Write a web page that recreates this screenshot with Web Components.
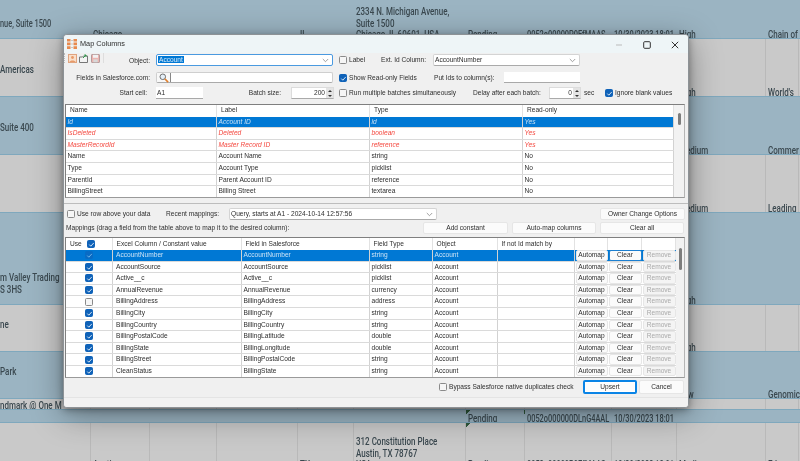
<!DOCTYPE html>
<html lang="en"><head><meta charset="utf-8"><title>Map Columns</title>
<style>html,body{margin:0;padding:0;background:#c8c8c8;overflow:hidden}
sheet-row b>span{display:block;transform:scaleX(.8);transform-origin:0 100%;margin-bottom:-3px}
sheet-row b.n>span{transform:scaleX(.74)}</style></head>
<body>
<desk-top>
  <sheet-row tone="blue" h="39"><b class="n">nue, Suite 1500<br>&nbsp;</b><b>Chicago</b><b></b><b></b><b>IL</b><b>2334 N. Michigan Avenue,<br>Suite 1500<br>Chicago, IL 60601, USA</b><b>Pending</b><b class="n">0052o00000P0EfMAAS</b><b class="n">10/30/2023 18:01</b><b>High</b><b>Chain of</b></sheet-row>
  <sheet-row tone="gray" h="58"><b>Americas<br>&nbsp;<br>&nbsp;</b><b></b><b></b><b></b><b></b><b></b><b></b><b></b><b></b><b>High</b><b>World's</b></sheet-row>
  <sheet-row tone="blue" h="58"><b>Suite 400<br>&nbsp;<br>&nbsp;</b><b></b><b></b><b></b><b></b><b></b><b></b><b></b><b></b><b>Medium</b><b>Commer</b></sheet-row>
  <sheet-row tone="gray" h="58"><b></b><b></b><b></b><b></b><b></b><b></b><b></b><b></b><b></b><b>Medium</b><b>Leading</b></sheet-row>
  <sheet-row tone="blue" h="92"><b>m Valley Trading<br>S 3HS<br>&nbsp;</b><b></b><b></b><b></b><b></b><b></b><b></b><b></b><b></b><b>High</b><b></b></sheet-row>
  <sheet-row tone="gray" h="47"><b>ne<br>&nbsp;<br>&nbsp;</b><b></b><b></b><b></b><b></b><b></b><b></b><b></b><b></b><b>High</b><b></b></sheet-row>
  <sheet-row tone="blue" h="47"><b>Park<br>&nbsp;<br>&nbsp;</b><b></b><b></b><b></b><b></b><b></b><b></b><b></b><b></b><b>Low</b><b>Genomic</b></sheet-row>
  <sheet-row tone="gray" h="11"><b>ndmark @ One M</b><b></b><b></b><b></b><b></b><b></b><b></b><b></b><b></b><b></b><b></b></sheet-row>
  <sheet-row tone="blue" h="13"><b></b><b></b><b></b><b></b><b></b><b></b><b class="flag">Pending</b><b class="n">0052o000000DLnG4AAL</b><b class="n">10/30/2023 18:01</b><b></b><b></b></sheet-row>
  <sheet-row tone="gray" h="46"><b></b><b>Austin</b><b></b><b></b><b>TX</b><b>312 Constitution Place<br>Austin, TX 78767<br>USA</b><b class="flag">Pending</b><b class="n">0052o00000P0EfMAAS</b><b class="n">10/30/2023 18:01</b><b>Medium</b><b>Educ</b></sheet-row>

  <map-dialog>
    <title-bar>Map Columns</title-bar>
    <form-row style="--c:92px 177px 48px 52px 147px;height:12px;margin-top:1px">
      <tool-strip>Object:</tool-strip>
      <ui-combo text="Account" focus></ui-combo>
      <ui-check style="margin-left:6px">Label</ui-check>
      <ui-text>Ext. Id Column:</ui-text>
      <ui-combo text="AccountNumber"></ui-combo>
    </form-row>
    <form-row style="--c:92px 177px 101px 70px 76px;height:10px;margin-top:6px">
      <ui-text right pad="6">Fields in Salesforce.com:</ui-text>
      <search-box></search-box>
      <ui-check checked style="margin-left:6px">Show Read-only Fields</ui-check>
      <ui-text>Put Ids to column(s):</ui-text>
      <ui-input></ui-input>
    </form-row>
    <form-row style="--c:92px 47px 88px 43px 139px 76px 32px 24px 83px;height:10px;margin-top:5px">
      <ui-text right pad="9">Start cell:</ui-text>
      <ui-input text="A1"></ui-input>
      <ui-text right pad="10">Batch size:</ui-text>
      <ui-spin text="200"></ui-spin>
      <ui-check style="margin-left:5px">Run multiple batches simultaneously</ui-check>
      <ui-text>Delay after each batch:</ui-text>
      <ui-spin text="0"></ui-spin>
      <ui-text style="margin-left:3px">sec</ui-text>
      <ui-check checked>Ignore blank values</ui-check>
    </form-row>
    <field-table></field-table>
    <split-bar></split-bar>
    <form-row style="--c:102px 63px 208px 163px 85px;height:11px;margin-top:4px">
      <ui-check style="margin-left:3px">Use row above your data</ui-check>
      <ui-text>Recent mappings:</ui-text>
      <ui-combo text="Query, starts at A1 - 2024-10-14 12:57:56"></ui-combo>
      <span></span>
      <ui-btn>Owner Change Options</ui-btn>
    </form-row>
    <form-row style="--c:355px 85px 84px 84px;column-gap:4px;height:12px;margin-top:3px">
      <ui-text style="margin-left:2px;white-space:nowrap">Mappings (drag a field from the table above to map it to the desired column):</ui-text>
      <ui-btn>Add constant</ui-btn>
      <ui-btn>Auto-map columns</ui-btn>
      <ui-btn>Clear all</ui-btn>
    </form-row>
    <map-table></map-table>
    <form-row style="--c:375px 144px 54px 2px 45px;height:14px;margin-top:2px">
      <span></span>
      <ui-check>Bypass Salesforce native duplicates check</ui-check>
      <ui-btn primary>Upsert</ui-btn>
      <span></span>
      <ui-btn>Cancel</ui-btn>
    </form-row>
    <foot-band></foot-band>
  </map-dialog>
</desk-top>

<script>
function make(name, css, html, setup){
  customElements.define(name, class extends HTMLElement{
    constructor(){super();const r=this.attachShadow({mode:'open'});
      r.innerHTML='<style>'+css+'</style>'+(typeof html==='function'?'':html);}
    connectedCallback(){
      if(typeof html==='function'){const s=this.shadowRoot;const st=s.querySelector('style');
        if(!this._done){st.insertAdjacentHTML('afterend',html(this));this._done=1}}
      if(setup)setup(this);
    }
  });
}
const esc=s=>String(s).replace(/&/g,'&amp;').replace(/</g,'&lt;');

make('desk-top',`:host{display:block;position:relative;width:800px;height:461px;overflow:hidden;background:#c8c8c8;filter:blur(.4px)}`,`<slot></slot>`);

make('sheet-row',`
:host{display:grid;box-sizing:border-box;grid-template-columns:91px 59px 67px 81px 56px 112px 59px 87px 65px 89px 33px;
  align-items:stretch;font:500 10px/11.7px "Roboto",sans-serif;color:#3a484f;overflow:hidden;border-bottom:1.5px solid #7fa8bd}
:host([tone=blue]){background:#9bb4c2}
:host([tone=gray]){background:#c9c9c9}
::slotted(b){font-weight:500;display:flex;align-items:flex-end;padding-left:2px;white-space:nowrap;box-sizing:border-box;border-right:1px solid transparent;min-width:0}
::slotted(b:first-child){padding-left:0}
:host([tone=gray]) ::slotted(b){border-right-color:#b9b9b9}
::slotted(b.flag){background:linear-gradient(135deg,#2f5a3c 3px,transparent 3px)}
`,`<slot></slot>`,el=>{
  el.style.height=el.getAttribute('h')+'px';
  [...el.children].forEach(c=>{if(c.childNodes.length&&!c.querySelector('span')){c.innerHTML='<span>'+c.innerHTML+'</span>'}});
});

make('map-dialog',`
:host{position:absolute;left:63px;top:34px;width:626px;height:374px;box-sizing:border-box;border:1px solid #8d9296;border-radius:4px;
 background:#f0f0f0;display:flex;flex-direction:column;overflow:hidden;
 box-shadow:0 2px 7px rgba(0,0,0,.32),0 7px 32px rgba(0,0,0,.38);
 font:6.6px/10px "Liberation Sans",Arial,sans-serif;color:#2e2e2e}
`,`<slot></slot>`);

make('title-bar',`
:host{display:flex;align-items:center;height:18px;background:#eef5f7;font-size:7.3px;color:#2e2e2e;flex:none;padding-left:3px}
.i{width:10px;height:10px;margin-right:3px;flex:none}
.t{flex:1}
.w{display:grid;grid-template-columns:28px 28px 28px;justify-items:center;align-items:center;width:84px;margin-right:-1px;margin-top:1px}
`,`<svg class="i" viewBox="0 0 10 10"><path fill="#e88a4e" d="M0 0h3.5v2.6H0zM0 3.6h3.5v2.6H0zM0 7.3h3.5V10H0zM6.5 0H10v2.6H6.5zM6.5 3.6H10v2.6H6.5zM6.5 7.3H10V10H6.5z"/><path fill="#c9c9c9" d="M4 1h2v1H4zM4 4.5h2v1H4zM4 8h2v1H4z"/></svg>
<span class="t"><slot></slot></span>
<span class="w">
<svg width="8" height="8" viewBox="0 0 8 8"><path d="M1 4h6" stroke="#bbb" fill="none"/></svg>
<svg width="8" height="8" viewBox="0 0 8 8"><rect x=".7" y=".7" width="6.6" height="6.6" rx="1" stroke="#333" fill="none"/></svg>
<svg width="8" height="8" viewBox="0 0 8 8"><path d="M.8.8l6.4 6.4M7.2.8L.8 7.2" stroke="#333" fill="none"/></svg>
</span>`);

make('form-row',`:host{display:grid;grid-template-columns:var(--c);align-items:center;flex:none;margin-left:0}`,`<slot></slot>`);

make('tool-strip',`
:host{display:flex;align-items:center;height:12px;padding-right:6px;box-sizing:border-box;white-space:nowrap}
.s{display:flex;gap:2px;align-items:center;border-left:1px dotted #bbb;padding-left:2.500px;margin-right:auto;height:10px;margin-top:-4px;padding-right:3px;border-right:1px solid #ddd}
svg{display:block;width:9px;height:9px}
svg+svg{margin-left:.5px}
.l{margin-top:1px}
`,`<span class="s">
<svg viewBox="0 0 9 9"><rect x=".5" y=".5" width="8" height="8" fill="#f8dfcb" stroke="#e0a47f"/><circle cx="4.5" cy="3.5" r="1.4" fill="#e89a68"/><path d="M1.5 8c.5-2 5.500-2 6 0z" fill="#e89a68"/></svg>
<svg viewBox="0 0 9 9"><path d="M.5 3h3l1-1h4v6.500h-8z" fill="#f3f3f3" stroke="#777"/><path d="M4 4l3-3M5.300 1H7v1.700" stroke="#2c9a4a" fill="none"/></svg>
<svg viewBox="0 0 9 9"><rect x=".5" y=".5" width="8" height="8" rx=".6" fill="#ecb4b0" stroke="#b39a9a"/><rect x="2" y=".8" width="5" height="3" fill="#f2f2f2"/><rect x="2.300" y="5.300" width="4.400" height="3" fill="#d8d8d8"/></svg>
</span><span class="l"><slot></slot></span>`);

make('ui-text',`:host{display:block;white-space:nowrap}`,`<slot></slot>`,el=>{
  if(el.hasAttribute('right')){el.style.textAlign='right'}
  if(el.hasAttribute('pad')){el.style.paddingRight=el.getAttribute('pad')+'px'}
});

const tick=`<svg viewBox="0 0 9 9" width="9" height="9"><path d="M2.300 4.600l1.500 1.600 3-3.300" stroke="#e8f2fb" stroke-width=".9" fill="none"/></svg>`;
make('ui-check',`
:host{display:inline-flex;align-items:center;gap:2px;white-space:nowrap;height:10px}
.b{width:8px;height:8px;box-sizing:border-box;border:1px solid #8a8a8a;border-radius:1.500px;background:#f6f6f6;flex:none;position:relative}
.b svg{position:absolute;left:-1px;top:-1px;display:none}
:host([checked]) .b{background:#0f62b8;border-color:#0f62b8}
:host([checked]) .b svg{display:block}
`,`<span class="b">${tick}</span><slot></slot>`);

make('ui-combo',`
:host{display:flex;align-items:center;height:100%;box-sizing:border-box;background:#fff;border:1px solid #d4d4d4;border-bottom-color:#aaa;border-radius:2px;padding:0 3px 0 1px;white-space:nowrap}
:host([focus]){border-color:#4a9ae0}
.t{flex:1;padding-left:0}
.sel{background:#0078d4;color:#d9ecfa;padding:0 1px}
svg{width:7px;height:5px;flex:none}
`,el=>{const f=el.hasAttribute('focus');return `<span class="t"><span class="${f?'sel':''}">${esc(el.getAttribute('text'))}</span></span><svg viewBox="0 0 7 5"><path d="M.8 1l2.700 2.700L6.200 1" stroke="#888" fill="none" stroke-width=".8"/></svg>`});

make('search-box',`
:host{display:flex;box-sizing:border-box;border:1px solid #cfcfcf;border-bottom-color:#aaa;background:#fff;border-radius:2px;height:11px}
.i{width:13px;border-right:1px solid #888;display:flex;align-items:center;justify-content:center;background:#f8f8f8}
`,`<span class="i"><svg width="10" height="10" viewBox="0 0 9 9"><circle cx="3.400" cy="3.400" r="2.500" fill="#e4eff8" stroke="#707070" stroke-width=".9"/><path d="M5.200 5.200L8.200 8.200" stroke="#e07f2c" stroke-width="1.500"/></svg></span>`);

make('ui-input',`
:host{display:flex;align-items:center;height:100%;box-sizing:border-box;background:#fff;border-bottom:1px solid #a9a9a9;padding-left:1px;white-space:nowrap}
`,el=>esc(el.getAttribute('text')||''));

make('ui-spin',`
:host{display:flex;height:100%;box-sizing:border-box;background:#fff;border:1px solid #dcdcdc;border-bottom-color:#aaa;white-space:nowrap;align-items:center}
.t{flex:1;text-align:right;padding-right:1px}
.a{width:7px;height:100%;background:#e4e4e4;display:flex;flex-direction:column;align-items:center;justify-content:space-around;flex:none}
i{display:block;width:0;height:0;border:2px solid transparent}
i.u{border-bottom:2.500px solid #333;border-top:0}
i.d{border-top:2.500px solid #333;border-bottom:0}
`,el=>`<span class="t">${esc(el.getAttribute('text'))}</span><span class="a"><i class="u"></i><i class="d"></i></span>`);

make('ui-btn',`
:host{display:flex;align-items:center;justify-content:center;height:100%;box-sizing:border-box;background:#fbfbfb;border:1px solid #e6e6e6;border-radius:2px;white-space:nowrap}
:host([primary]){border:2px solid #0a84e6;outline:none;background:#fdfdfd;box-shadow:inset 0 0 0 1px #fff;height:14px}
:host([dim]){color:#a9a9a9;background:#f4f4f4}
:host([ring]){border:1px solid #1c7fd0}
`,`<slot></slot>`);

const gridCss=`
:host{display:block;flex:none;box-sizing:border-box;margin:0 3px 0 1px;width:620px;border:1px solid #7f7f7f;border-right-color:#b5b5b5;border-bottom-color:#9a9a9a;background:#f3f3f3;position:relative;overflow:hidden}
.wrap{display:flex;height:100%}
.main{flex:1;background:#fff;overflow:hidden;min-width:0}
.row{display:grid;grid-template-columns:var(--g);height:11.600px;box-sizing:border-box;border-bottom:1px solid #dadada;line-height:10.600px;white-space:nowrap}
.row>span{border-right:1px solid #d2d2d2;padding-left:1.500px;overflow:hidden;min-width:0;box-sizing:border-box}
.row.head>span{padding-left:4px;border-right-color:#e2e2e2}
.row.head{border-bottom:0}
.row.sel{background:#0078d4;color:#c9e2f6}
.sc{width:var(--sw);background:#f2f2f2;flex:none;position:relative}
.sc i{position:absolute;left:3px;width:3px;background:#7d7d7d;border-radius:2px}
`;

const fields=[['Id','Account ID','id','Yes',1],['IsDeleted','Deleted','boolean','Yes',2],['MasterRecordId','Master Record ID','reference','Yes',2],
['Name','Account Name','string','No'],['Type','Account Type','picklist','No'],['ParentId','Parent Account ID','reference','No'],['BillingStreet','Billing Street','textarea','No']];
make('field-table',gridCss+`
:host{height:94px;margin-top:7px;--g:151px 153px 153px 151px;--sw:10px}
.ro{font-style:italic}.red{color:#f4483f;font-style:italic}
.sc i{top:8px;height:12px;left:4px}
`,()=>`<div class="wrap"><div class="main">
<div class="row head"><span>Name</span><span>Label</span><span>Type</span><span>Read-only</span></div>
${fields.map(f=>`<div class="row ${f[4]==1?'sel ro':f[4]==2?'red':''}"><span>${f[0]}</span><span>${f[1]}</span><span>${f[2]}</span><span>${f[3]}</span></div>`).join('')}
</div><div class="sc"><i></i></div></div>`);

make('split-bar',`:host{display:block;height:6px;flex:none;box-sizing:border-box;border-bottom:1px solid #bdbdbd;background:#f0f0f0}`,``);

const maps=[['AccountNumber','AccountNumber','string'],['AccountSource','AccountSource','picklist'],['Active__c','Active__c','picklist'],['AnnualRevenue','AnnualRevenue','currency'],['BillingAddress','BillingAddress','address'],['BillingCity','BillingCity','string'],['BillingCountry','BillingCountry','string'],['BillingPostalCode','BillingLatitude','double'],['BillingState','BillingLongitude','double'],['BillingStreet','BillingPostalCode','string'],['CleanStatus','BillingState','string']];
make('map-table',gridCss+`
:host{height:141px;margin-top:3px;--g:47px 129px 128px 63px 65px 77px 33px 34px 34px;--sw:8px}
.row.head{height:12px;line-height:11.600px}
.row.head>span:nth-child(n+2){padding-left:3.500px}
.use{display:flex;align-items:center;justify-content:flex-start;padding-left:19px!important}
.head .use{padding-left:4px!important;gap:5px}
.row>span.b{padding:0 .5px;border-right:0}
.b ui-btn{height:10.500px}
.row>span:nth-child(2){padding-left:3px}
.sc i{top:10px;height:22px;left:3px;width:3px}
.sel .bx{opacity:.55}
`,()=>`<div class="wrap"><div class="main">
<div class="row head"><span class="use">Use <ui-check checked></ui-check></span><span>Excel Column / Constant value</span><span>Field in Salesforce</span><span>Field Type</span><span>Object</span><span>If not Id match by</span><span></span><span></span><span></span></div>
${maps.map((m,i)=>`<div class="row ${i==0?'sel':''}"><span class="use"><ui-check class="bx" ${i==4?'':'checked'}></ui-check></span><span>${m[0]}</span><span>${m[1]}</span><span>${m[2]}</span><span>Account</span><span></span><span class="b"><ui-btn style="color:#2e2e2e">Automap</ui-btn></span><span class="b"><ui-btn ${i==0?'ring':''} style="color:#2e2e2e">Clear</ui-btn></span><span class="b"><ui-btn dim>Remove</ui-btn></span></div>`).join('')}
</div><div class="sc"><i></i></div></div>`);

make('foot-band',`:host{display:block;flex:1;margin-top:3px;border-top:1px solid #e4e4e4;background:#f2f2f2}`,``);
</script>
</body></html>
